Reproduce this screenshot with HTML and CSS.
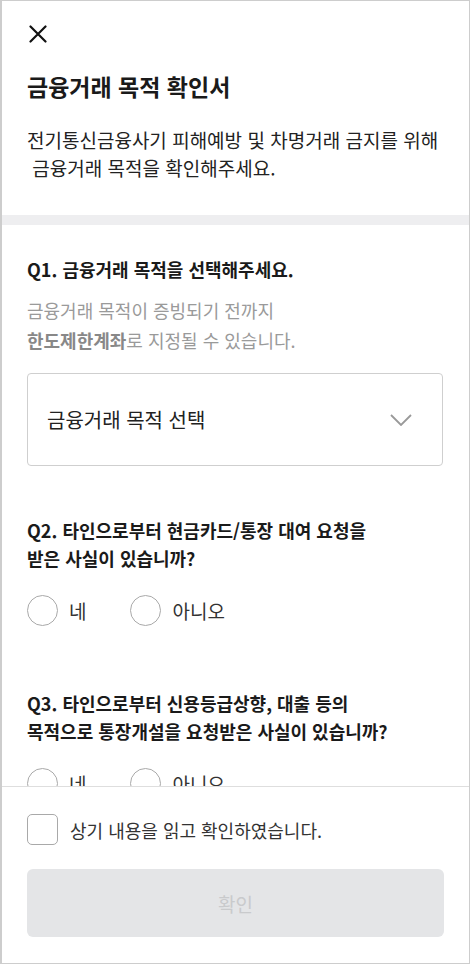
FILE: index.html
```html
<!DOCTYPE html>
<html lang="ko">
<head>
    <meta charset="UTF-8">
    <meta name="viewport" content="width=device-width, initial-scale=1.0">
    <title>금융거래 목적 확인서</title>
    <link rel="stylesheet" href="styles.css">
</head>
<body>
    <div class="screen">
        <div class="content">
            <header class="top">
                <button class="close" type="button" aria-label="닫기">
                    <svg width="18" height="18" viewBox="0 0 18 18">
                        <path d="M1.5 1.5 L16.5 16.5 M16.5 1.5 L1.5 16.5" stroke="#111" stroke-width="2.2" stroke-linecap="round" fill="none"/>
                    </svg>
                </button>
                <h1>금융거래 목적 확인서</h1>
                <p class="desc">전기통신금융사기 피해예방 및 차명거래 금지를 위해<br>&nbsp;금융거래 목적을 확인해주세요.</p>
            </header>

            <div class="divider"></div>

            <section class="question q1">
                <h2>Q1. 금융거래 목적을 선택해주세요.</h2>
                <p class="hint">금융거래 목적이 증빙되기 전까지<br><b>한도제한계좌</b>로 지정될 수 있습니다.</p>
                <div class="select">
                    <span>금융거래 목적 선택</span>
                    <svg width="22" height="12" viewBox="0 0 22 12">
                        <path d="M1 1 L11 11 L21 1" stroke="#999" stroke-width="1.8" fill="none"/>
                    </svg>
                </div>
            </section>

            <section class="question q2">
                <h2>Q2. 타인으로부터 현금카드/통장 대여 요청을<br>받은 사실이 있습니까?</h2>
                <div class="radios">
                    <label class="radio"><span class="circle"></span>네</label>
                    <label class="radio"><span class="circle"></span>아니오</label>
                </div>
            </section>

            <section class="question q3">
                <h2>Q3. 타인으로부터 신용등급상향, 대출 등의<br>목적으로 통장개설을 요청받은 사실이 있습니까?</h2>
                <div class="radios">
                    <label class="radio"><span class="circle"></span>네</label>
                    <label class="radio"><span class="circle"></span>아니오</label>
                </div>
            </section>
        </div>

        <footer class="bottom">
            <label class="agree"><span class="box"></span>상기 내용을 읽고 확인하였습니다.</label>
            <button class="confirm" type="button" disabled>확인</button>
        </footer>
    </div>
</body>
</html>
```

FILE: styles.css
```css
* {
    box-sizing: border-box;
}
body {
    margin: 0;
    font-family: "Noto Sans CJK KR", "Noto Sans", sans-serif;
    color: #222;
    background: #fff;
}
.screen {
    width: 470px;
    height: 964px;
    border: 1px solid #cdcdcd;
    border-left-width: 2px;
    display: flex;
    flex-direction: column;
    overflow: hidden;
}
.content {
    flex: 1;
    overflow: hidden;
}
.top {
    padding: 24px 25px 0;
}
.close {
    display: block;
    background: none;
    border: none;
    padding: 0;
    margin: 0 0 0 2px;
    width: 18px;
    height: 18px;
}
.close svg {
    display: block;
}
h1 {
    margin: 28px 0 0;
    font-size: 23px;
    font-weight: 700;
    line-height: 30px;
    color: #1a1a1a;
}
.desc {
    margin: 25px 0 0;
    font-size: 19px;
    line-height: 28px;
    color: #222;
}
.divider {
    height: 10px;
    background: #eeeef0;
    margin-top: 33px;
}
.question {
    padding: 0 25px;
}
.q1 {
    margin-top: 30px;
}
.q2 {
    margin-top: 50px;
}
.q3 {
    margin-top: 63px;
}
h2 {
    margin: 0;
    font-size: 18px;
    font-weight: 700;
    line-height: 28px;
    color: #1a1a1a;
}
.hint {
    margin: 12px 0 0;
    font-size: 18px;
    line-height: 30px;
    color: #9a9a9a;
}
.hint b {
    font-weight: 700;
    color: #888;
}
.select {
    margin-top: 18px;
    height: 93px;
    width: 416px;
    border: 1px solid #cfcfcf;
    border-radius: 4px;
    display: flex;
    align-items: center;
    justify-content: space-between;
    padding: 0 30px 0 19px;
    font-size: 20px;
    color: #222;
}
.radios {
    display: flex;
    gap: 44px;
    margin-top: 23px;
}
.radio {
    display: flex;
    align-items: center;
    gap: 11px;
    font-size: 19px;
    color: #333;
}
.circle {
    width: 31px;
    height: 31px;
    border: 1.5px solid #a9a9a9;
    border-radius: 50%;
}
.bottom {
    border-top: 1px solid #dedede;
    padding: 27px 25px 26px;
    background: #fff;
}
.agree {
    display: flex;
    align-items: center;
    gap: 12px;
    font-size: 18px;
    color: #333;
}
.box {
    width: 31px;
    height: 31px;
    border: 1.5px solid #a9a9a9;
    border-radius: 5px;
}
.confirm {
    display: block;
    width: 417px;
    height: 68px;
    margin-top: 24px;
    border: none;
    border-radius: 6px;
    background: #e4e5e7;
    color: #c9cacc;
    font-family: inherit;
    font-size: 19px;
}
```
